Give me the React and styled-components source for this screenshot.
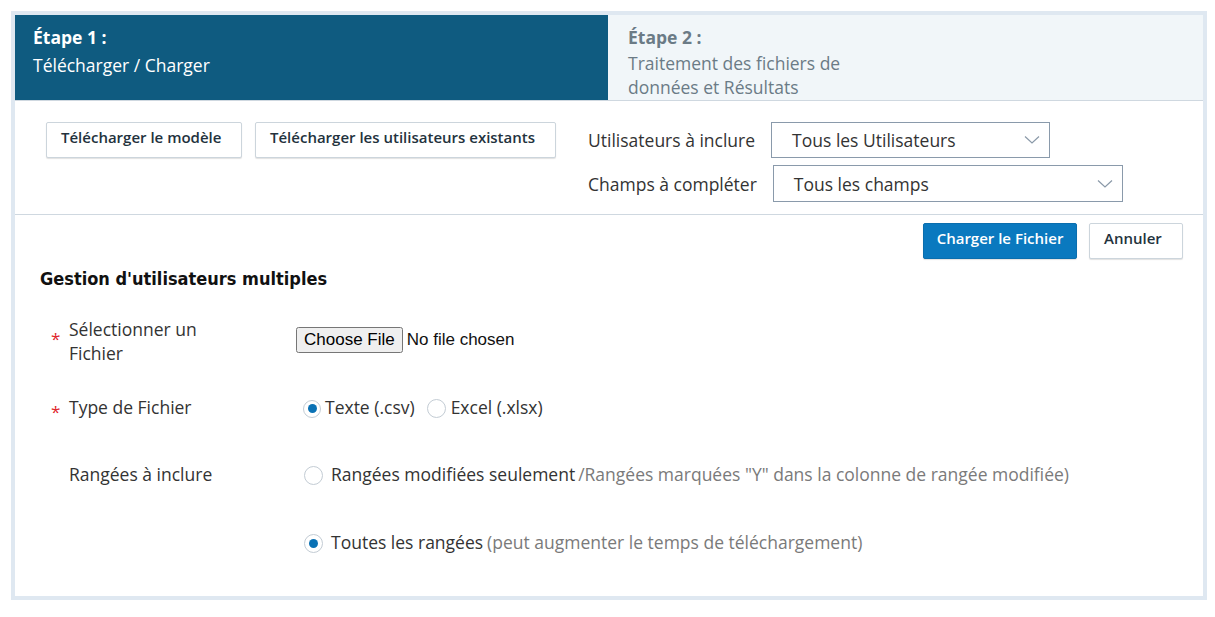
import React from "react";
import styled, { createGlobalStyle } from "styled-components";

const Global = createGlobalStyle`
  html, body { margin: 0; padding: 0; background: #fff; }
  body { font-family: "Open Sans", "Liberation Sans", sans-serif; color: #333; }
  * { box-sizing: border-box; }
`;

const Page = styled.div`
  padding: 11px 8px 18px 11px;
`;

const Frame = styled.div`
  width: 1196px;
  height: 589px;
  border: 4px solid #dfe8f1;
  background: #fff;
  display: flex;
  flex-direction: column;
`;

const Steps = styled.div`
  display: grid;
  grid-template-columns: 593px 1fr;
  height: 86px;
  border-bottom: 1px solid #cfd8e0;
`;

const Step = styled.div`
  background: ${(p) => (p.$active ? "#0f5b80" : "#f1f6f9")};
  color: ${(p) => (p.$active ? "#ffffff" : "#6b7b86")};
  padding: 10px 18px 0 ${(p) => (p.$active ? "18px" : "20px")};
  font-size: 17.5px;
  line-height: 25px;
`;

const StepTitle = styled.div`
  font-weight: 700;
  margin-bottom: ${(p) => (p.$gap ? p.$gap : "1px")};
`;

const StepText = styled.div`
  max-width: 250px;
  line-height: 24px;
`;

const Toolbar = styled.div`
  height: 114px;
  border-bottom: 1px solid #cfd8e0;
  display: flex;
  align-items: flex-start;
  padding: 21px 0 0 31px;
`;

const ButtonGroup = styled.div`
  display: flex;
  gap: 13px;
`;

const Button = styled.button`
  height: 36px;
  padding: 0 0 6px ${(p) => (p.$primary ? "0" : "14px")};
  text-align: ${(p) => (p.$primary ? "center" : "left")};
  font-family: "Open Sans", sans-serif;
  font-size: 15px;
  font-weight: 600;
  border-radius: 2px;
  cursor: pointer;
  background: ${(p) => (p.$primary ? "#0a79bf" : "#fff")};
  color: ${(p) => (p.$primary ? "#fff" : "#23323d")};
  border: 1px solid ${(p) => (p.$primary ? "#0a6eae" : "#ccd5dc")};
  box-shadow: 0 1px 1px rgba(0, 0, 0, 0.12);
  width: ${(p) => p.$w || "auto"};
`;

const Filters = styled.div`
  display: flex;
  flex-direction: column;
  gap: 7px;
  margin-left: 32px;
`;

const FilterRow = styled.div`
  display: flex;
  align-items: center;
  gap: ${(p) => p.$gap || "16px"};
`;

const FilterLabel = styled.label`
  font-size: 17.5px;
  color: #333;
`;

const Select = styled.div`
  position: relative;
  width: ${(p) => p.$w};
  height: ${(p) => p.$h || "36px"};
  border: 1px solid #8a9aab;
  display: flex;
  align-items: center;
  padding-left: 20px;
  font-size: 17.5px;
  color: #333;
`;

const Chevron = styled.svg`
  position: absolute;
  right: 9px;
  top: 50%;
  transform: translateY(-50%);
`;

const ActionRow = styled.div`
  display: flex;
  justify-content: flex-end;
  gap: 12px;
  padding: 8px 20px 0 0;
`;

const Section = styled.div`
  padding: 0 0 0 25px;
`;

const SectionTitle = styled.h2`
  margin: 8px 0 0;
  font-family: "DejaVu Sans Condensed", "DejaVu Sans", sans-serif;
  font-size: 18px;
  font-weight: 700;
  color: #111;
  line-height: 24px;
`;

const Form = styled.div`
  display: grid;
  grid-template-columns: 256px 1fr;
  margin-top: 26px;
`;

const LabelCell = styled.div`
  position: relative;
  padding-left: 29px;
  font-size: 17.5px;
  line-height: 24px;
  color: #333;
  height: ${(p) => p.$h};
`;

const Star = styled.span`
  position: absolute;
  left: 11px;
  top: ${(p) => p.$top || "5px"};
  color: #e0262c;
  font-size: 17px;
`;

const ControlCell = styled.div`
  display: flex;
  align-items: flex-start;
  padding-left: ${(p) => p.$pl || "0"};
  height: ${(p) => p.$h};
`;

const FileInput = styled.input`
  font-family: "Liberation Sans", Arial, sans-serif;
  font-size: 17px;
  color: #111;
  margin: 0;
  margin-top: 10px;
`;

const RadioLabel = styled.label`
  display: inline-flex;
  align-items: center;
  font-size: 17.5px;
  color: #333;
  margin-right: ${(p) => p.$mr || "0"};
  line-height: 24px;
`;

const RadioCircle = styled.span`
  width: ${(p) => p.$size || "18px"};
  height: ${(p) => p.$size || "18px"};
  border-radius: 50%;
  border: 1px solid #c3ccd4;
  background: #fff;
  display: inline-flex;
  align-items: center;
  justify-content: center;
  margin-right: ${(p) => p.$gap || "4px"};
  margin-top: 3px;
  flex-shrink: 0;
  &::after {
    content: "";
    width: 9px;
    height: 9px;
    border-radius: 50%;
    background: ${(p) => (p.$checked ? "#0a72b5" : "transparent")};
  }
`;

const Hint = styled.span`
  color: #7a7a7a;
  margin-left: ${(p) => p.$ml || "3px"};
`;

const ChevronIcon = () => (
  <Chevron width="16" height="10" viewBox="0 0 16 10">
    <path d="M1 1.5 L8 8 L15 1.5" fill="none" stroke="#8a99a8" strokeWidth="1.2" />
  </Chevron>
);

export default function App() {
  return (
    <>
      <Global />
      <Page>
        <Frame>
          <Steps>
            <Step $active>
              <StepTitle $gap="3px">Étape 1 :</StepTitle>
              <StepText>Télécharger / Charger</StepText>
            </Step>
            <Step>
              <StepTitle>Étape 2 :</StepTitle>
              <StepText>Traitement des fichiers de données et Résultats</StepText>
            </Step>
          </Steps>

          <Toolbar>
            <ButtonGroup>
              <Button $w="196px">Télécharger le modèle</Button>
              <Button $w="301px">Télécharger les utilisateurs existants</Button>
            </ButtonGroup>
            <Filters>
              <FilterRow>
                <FilterLabel>Utilisateurs à inclure</FilterLabel>
                <Select $w="279px">
                  Tous les Utilisateurs
                  <ChevronIcon />
                </Select>
              </FilterRow>
              <FilterRow>
                <FilterLabel>Champs à compléter</FilterLabel>
                <Select $w="350px" $h="37px">
                  Tous les champs
                  <ChevronIcon />
                </Select>
              </FilterRow>
            </Filters>
          </Toolbar>

          <ActionRow>
            <Button $primary $w="154px">Charger le Fichier</Button>
            <Button $w="94px">Annuler</Button>
          </ActionRow>

          <Section>
            <SectionTitle>Gestion d'utilisateurs multiples</SectionTitle>
            <Form>
              <LabelCell $h="78px">
                <Star $top="10px">*</Star>
                Sélectionner un
                <br />
                Fichier
              </LabelCell>
              <ControlCell $h="78px">
                <FileInput type="file" />
              </ControlCell>

              <LabelCell $h="67px">
                <Star>*</Star>
                Type de Fichier
              </LabelCell>
              <ControlCell $h="67px" $pl="7px">
                <RadioLabel $mr="12px">
                  <RadioCircle $checked />
                  Texte (.csv)
                </RadioLabel>
                <RadioLabel>
                  <RadioCircle $size="19px" $gap="5px" />
                  Excel (.xlsx)
                </RadioLabel>
              </ControlCell>

              <LabelCell $h="68px">Rangées à inclure</LabelCell>
              <ControlCell $h="68px" $pl="8px">
                <RadioLabel>
                  <RadioCircle $size="19px" $gap="8px" />
                  Rangées modifiées seulement
                  <Hint>/Rangées marquées "Y" dans la colonne de rangée modifiée)</Hint>
                </RadioLabel>
              </ControlCell>

              <LabelCell $h="40px" />
              <ControlCell $h="40px" $pl="8px">
                <RadioLabel>
                  <RadioCircle $size="19px" $gap="8px" $checked />
                  Toutes les rangées
                  <Hint $ml="4px">(peut augmenter le temps de téléchargement)</Hint>
                </RadioLabel>
              </ControlCell>
            </Form>
          </Section>
        </Frame>
      </Page>
    </>
  );
}
